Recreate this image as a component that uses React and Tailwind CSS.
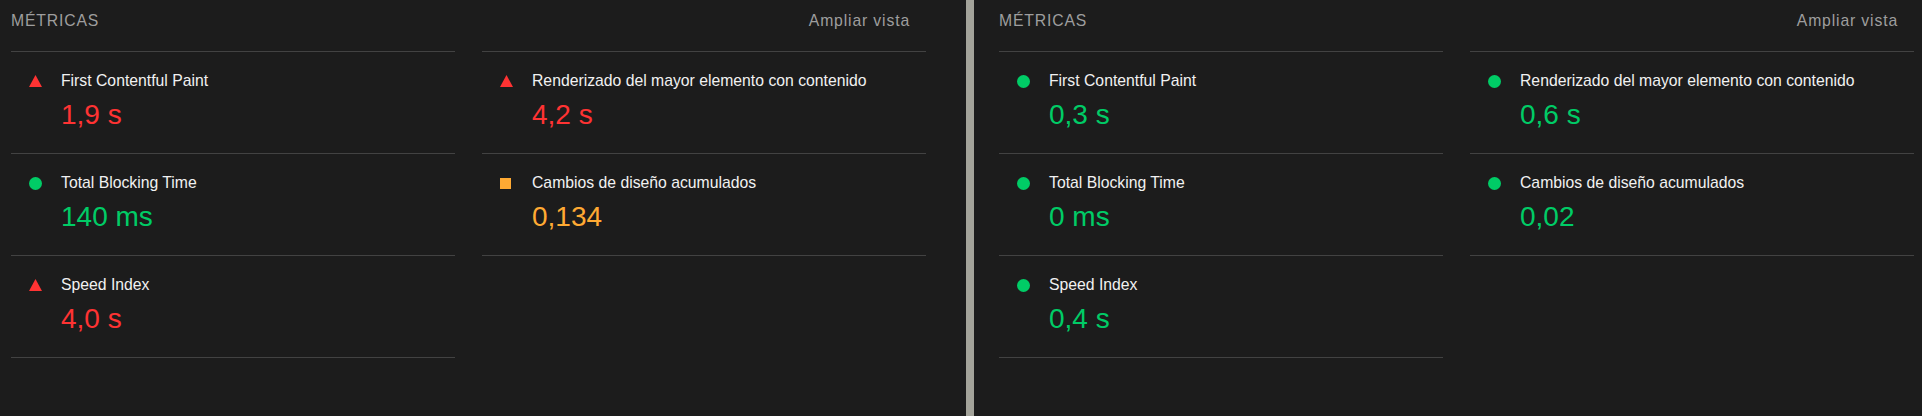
const red = "#ff3333";

const panels = [
  {
    cls: "w-[966px] pl-[11px] pr-[40px]",
    cols: [
      [
        { title: "First Contentful Paint", value: "1,9 s", kind: "fail" },
        { title: "Total Blocking Time", value: "140 ms", kind: "pass" },
        { title: "Speed Index", value: "4,0 s", kind: "fail" },
      ],
      [
        { title: "Renderizado del mayor elemento con contenido", value: "4,2 s", kind: "fail" },
        { title: "Cambios de diseño acumulados", value: "0,134", kind: "average" },
      ],
    ],
  },
  {
    cls: "w-[948px] pl-[25px] pr-[8px]",
    cols: [
      [
        { title: "First Contentful Paint", value: "0,3 s", kind: "pass" },
        { title: "Total Blocking Time", value: "0 ms", kind: "pass" },
        { title: "Speed Index", value: "0,4 s", kind: "pass" },
      ],
      [
        { title: "Renderizado del mayor elemento con contenido", value: "0,6 s", kind: "pass" },
        { title: "Cambios de diseño acumulados", value: "0,02", kind: "pass" },
      ],
    ],
  },
];

const valueColors = {
  fail: "text-[#ff3333]",
  pass: "text-[#00cc66]",
  average: "text-[#ffaa33]",
};

function Icon({ kind }) {
  if (kind === "fail") {
    return (
      <svg width="13" height="12" viewBox="0 0 13 12">
        <polygon points="0,12 6.5,0 13,12" fill={red} />
      </svg>
    );
  }
  if (kind === "average") {
    return <span className="block h-[11px] w-[11px] bg-[#ffaa33]" />;
  }
  return <span className="block h-[13px] w-[13px] rounded-full bg-[#00cc66]" />;
}

function Metric({ title, value, kind, last }) {
  return (
    <div className={`flex border-t border-[#424242] pt-5 pb-[22px] ${last ? "border-b" : ""}`}>
      <div className="ml-[18px] flex h-[18px] w-[13px] items-center">
        <Icon kind={kind} />
      </div>
      <div className="ml-[19px]">
        <div className="text-[15.75px] leading-[18px] text-[#f1f1f1]">{title}</div>
        <div className={`mt-[9px] text-[28px] leading-[32px] ${valueColors[kind]}`}>{value}</div>
      </div>
    </div>
  );
}

function Panel({ panel }) {
  return (
    <div className={`h-full shrink-0 ${panel.cls}`}>
      <div className="flex h-[51px] items-start justify-between pt-3 text-[15.75px] leading-[18px] tracking-[0.85px] text-[#9e9e9e]">
        <span>MÉTRICAS</span>
        <button className="pr-4 tracking-[0.85px]">Ampliar vista</button>
      </div>
      <div className="grid grid-cols-[444px_444px] gap-x-[27px]">
        {panel.cols.map((col, i) => (
          <div key={i}>
            {col.map((m, j) => (
              <Metric key={m.title} {...m} last={j === col.length - 1} />
            ))}
          </div>
        ))}
      </div>
    </div>
  );
}

export default function App() {
  return (
    <div className="flex h-[416px] w-[1922px] overflow-hidden bg-[#1c1c1c] font-['Liberation_Sans',Arial,sans-serif]">
      <Panel panel={panels[0]} />
      <div className="h-full w-[8px] shrink-0 bg-[#a3a39a]" />
      <Panel panel={panels[1]} />
    </div>
  );
}
